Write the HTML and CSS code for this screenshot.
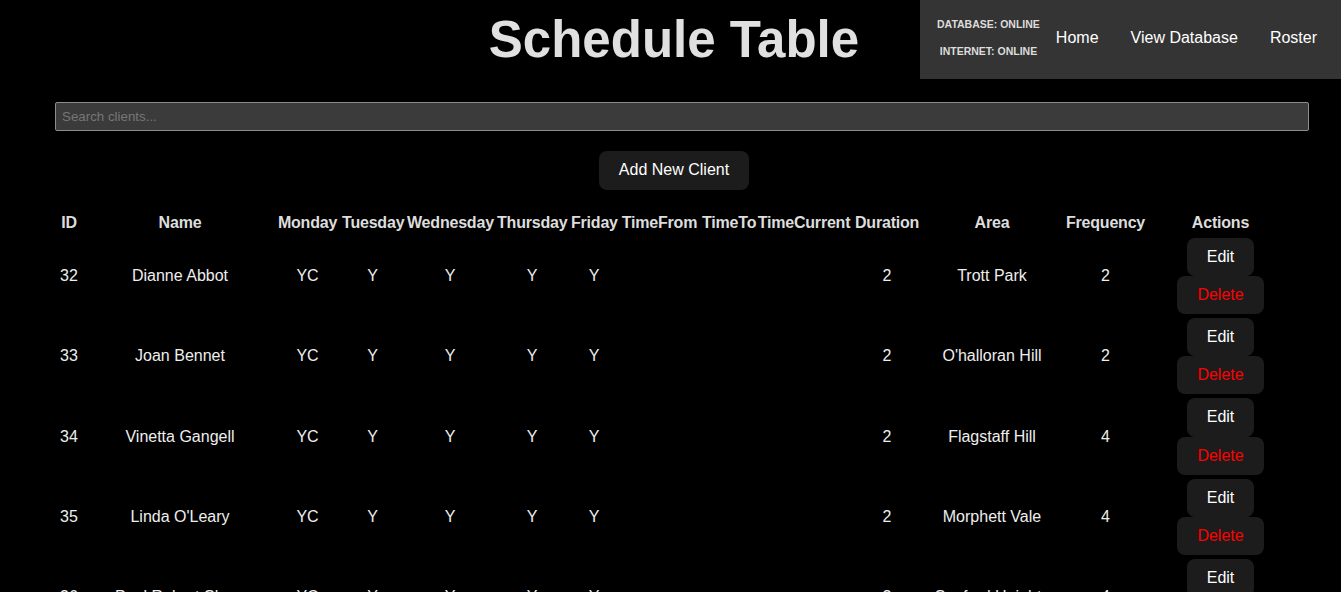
FILE: index.html
```html
<!DOCTYPE html>
<html lang="en">
<head>
<meta charset="utf-8">
<title>Schedule Table</title>
<link rel="stylesheet" href="styles.css">
</head>
<body>
<header class="top">
  <h1 class="page-title">Schedule Table</h1>
  <nav class="status-bar">
    <div class="status">
      <span>DATABASE: ONLINE</span>
      <span>INTERNET: ONLINE</span>
    </div>
    <a class="nav-link" href="#">Home</a>
    <a class="nav-link" href="#">View Database</a>
    <a class="nav-link" href="#">Roster</a>
  </nav>
</header>

<div class="search-wrap">
  <input class="search" type="text" placeholder="Search clients...">
</div>

<div class="add-row">
  <button class="btn">Add New Client</button>
</div>

<table class="schedule">
  <thead>
    <tr>
      <th class="col-id">ID</th>
      <th class="col-name">Name</th>
      <th class="col-mon">Monday</th>
      <th class="col-tue">Tuesday</th>
      <th class="col-wed">Wednesday</th>
      <th class="col-thu">Thursday</th>
      <th class="col-fri">Friday</th>
      <th class="col-from">TimeFrom</th>
      <th class="col-to">TimeTo</th>
      <th class="col-cur">TimeCurrent</th>
      <th class="col-dur">Duration</th>
      <th class="col-area">Area</th>
      <th class="col-freq">Frequency</th>
      <th class="col-actions">Actions</th>
    </tr>
  </thead>
  <tbody>
    <tr>
      <td>32</td><td>Dianne Abbot</td><td>YC</td><td>Y</td><td>Y</td><td>Y</td><td>Y</td><td></td><td></td><td></td><td>2</td><td>Trott Park</td><td>2</td>
      <td><div class="actions"><button class="btn">Edit</button><button class="btn btn-delete">Delete</button></div></td>
    </tr>
    <tr>
      <td>33</td><td>Joan Bennet</td><td>YC</td><td>Y</td><td>Y</td><td>Y</td><td>Y</td><td></td><td></td><td></td><td>2</td><td>O'halloran Hill</td><td>2</td>
      <td><div class="actions"><button class="btn">Edit</button><button class="btn btn-delete">Delete</button></div></td>
    </tr>
    <tr>
      <td>34</td><td>Vinetta Gangell</td><td>YC</td><td>Y</td><td>Y</td><td>Y</td><td>Y</td><td></td><td></td><td></td><td>2</td><td>Flagstaff Hill</td><td>4</td>
      <td><div class="actions"><button class="btn">Edit</button><button class="btn btn-delete">Delete</button></div></td>
    </tr>
    <tr>
      <td>35</td><td>Linda O'Leary</td><td>YC</td><td>Y</td><td>Y</td><td>Y</td><td>Y</td><td></td><td></td><td></td><td>2</td><td>Morphett Vale</td><td>4</td>
      <td><div class="actions"><button class="btn">Edit</button><button class="btn btn-delete">Delete</button></div></td>
    </tr>
    <tr>
      <td>36</td><td>Paul Robert Sloan</td><td>YC</td><td>Y</td><td>Y</td><td>Y</td><td>Y</td><td></td><td></td><td></td><td>2</td><td>Seaford Heights</td><td>4</td>
      <td><div class="actions"><button class="btn">Edit</button><button class="btn btn-delete">Delete</button></div></td>
    </tr>
  </tbody>
</table>
</body>
</html>
```

FILE: styles.css
```css
html, body {
  background: #000;
}

body {
  margin: 0;
  font-family: "Liberation Sans", Arial, sans-serif;
  color: #eee;
}

.top {
  position: relative;
  padding-top: 10px;
}

.page-title {
  margin: 0;
  padding-left: 7px;
  text-align: center;
  font-size: 51px;
  font-weight: bold;
  line-height: normal;
  color: #e0e0e0;
}

.status-bar {
  position: absolute;
  top: 0;
  right: 0;
  width: 421px;
  height: 79px;
  box-sizing: border-box;
  padding: 0 8px 4px 17px;
  background: #343434;
  display: flex;
  align-items: center;
}

.status {
  display: flex;
  flex-direction: column;
  align-items: center;
  gap: 15px;
  font-size: 10.5px;
  font-weight: bold;
  line-height: 12px;
  color: #ddd;
}

.nav-link {
  padding: 0 16px;
  color: #fff;
  font-size: 16px;
  text-decoration: none;
}

.search-wrap {
  margin: 33.4px 32px 0 55px;
}

.search {
  display: block;
  width: 100%;
  height: 29px;
  box-sizing: border-box;
  padding: 0 6px;
  background: #3b3b3b;
  border: 1px solid #8c8c8c;
  border-radius: 2px;
  color: #eee;
  font-family: "Liberation Sans", Arial, sans-serif;
  font-size: 13.333px;
  outline: none;
}

.search::placeholder {
  color: #767676;
}

.add-row {
  display: flex;
  justify-content: center;
  margin-top: 20px;
  padding-left: 7px;
}

.btn {
  padding: 10px 20px;
  background: #1c1c1c;
  color: #fff;
  border: none;
  border-radius: 8px;
  font-family: "Liberation Sans", Arial, sans-serif;
  font-size: 16px;
  line-height: 18.2px;
  cursor: pointer;
}

.btn-delete {
  color: #ff0000;
}

.schedule {
  table-layout: fixed;
  width: 1242px;
  margin: 21px 0 0 52px;
  border-spacing: 2px;
  font-size: 16px;
}

.schedule th,
.schedule td {
  box-sizing: border-box;
  padding: 1px;
  text-align: center;
  vertical-align: middle;
}

.schedule th {
  padding-bottom: 3px;
  font-weight: bold;
  letter-spacing: -0.2px;
  white-space: nowrap;
  color: #ddd;
}

.schedule td {
  color: #eee;
}

.col-id { width: 30px; }
.col-name { width: 188px; }
.col-mon { width: 63px; }
.col-tue { width: 63px; }
.col-wed { width: 88px; }
.col-thu { width: 72px; }
.col-fri { width: 48px; }
.col-from { width: 79px; }
.col-to { width: 53px; }
.col-cur { width: 96px; }
.col-dur { width: 66px; }
.col-area { width: 140px; }
.col-freq { width: 83px; }
.col-actions { width: 143px; }

.actions {
  display: flex;
  flex-direction: column;
  align-items: center;
}
```
